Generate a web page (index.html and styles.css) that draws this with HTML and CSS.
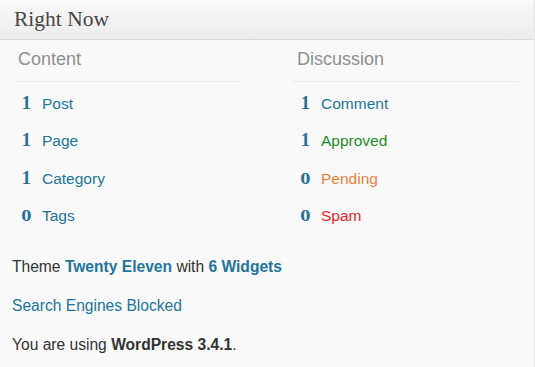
FILE: index.html
```html
<!DOCTYPE html>
<html>
<head>
<meta charset="utf-8">
<link rel="stylesheet" href="styles.css">
</head>
<body>
<div class="widget">
  <div class="widget-head">Right Now</div>
  <div class="widget-body">
    <div class="columns">
      <div class="col">
        <div class="col-title">Content</div>
        <div class="row"><span class="count">1</span><a class="label">Post</a></div>
        <div class="row"><span class="count">1</span><a class="label">Page</a></div>
        <div class="row"><span class="count">1</span><a class="label">Category</a></div>
        <div class="row"><span class="count"><span class="zero">0</span></span><a class="label">Tags</a></div>
      </div>
      <div class="col">
        <div class="col-title">Discussion</div>
        <div class="row"><span class="count">1</span><a class="label">Comment</a></div>
        <div class="row"><span class="count">1</span><a class="label approved">Approved</a></div>
        <div class="row"><span class="count"><span class="zero">0</span></span><a class="label pending">Pending</a></div>
        <div class="row"><span class="count"><span class="zero">0</span></span><a class="label spam">Spam</a></div>
      </div>
    </div>
    <div class="info">
      <p class="line">Theme <a class="strong-link">Twenty Eleven</a> with <a class="strong-link">6 Widgets</a></p>
      <p class="line"><a class="link">Search Engines Blocked</a></p>
      <p class="line">You are using <b class="strong">WordPress 3.4.1</b>.</p>
    </div>
  </div>
</div>
</body>
</html>
```
FILE: styles.css
```css
html, body {
  margin: 0;
  padding: 0;
  background: #f9f9f9;
}
body {
  font-family: "Liberation Sans", Arial, sans-serif;
  color: #333;
}
.widget {
  width: 534px;
  height: 367px;
  border-right: 1px solid #e2e2e2;
  background: #f9f9f9;
}
.widget-head {
  height: 39px;
  line-height: 39px;
  padding-left: 14px;
  border-bottom: 1px solid #dcdcdc;
  background: linear-gradient(to bottom, #f9f9f9, #ececec);
  font-family: "Liberation Serif", Georgia, serif;
  font-size: 21.5px;
  color: #464646;
}
.widget-body {
  padding: 0 15px 0 14px;
}
.columns {
  display: grid;
  grid-template-columns: 228px 226px;
  column-gap: 51px;
  padding-top: 8px;
}
.col-title {
  font-size: 18px;
  line-height: 22px;
  color: #8f8f8f;
  padding: 0 0 11px 4px;
  border-bottom: 1px solid #ececec;
  margin-bottom: 3px;
}
.row {
  display: flex;
  align-items: baseline;
  gap: 11px;
  height: 37.3px;
  line-height: 37.3px;
}
.count {
  width: 17px;
  text-align: right;
  font-family: "Liberation Serif", Georgia, serif;
  font-weight: bold;
  font-size: 18.5px;
  color: #2a6f96;
}
.zero {
  display: inline-block;
  font-size: 17px;
  transform: scaleX(1.2);
  transform-origin: right center;
}
.label {
  font-size: 15.5px;
  color: #21759b;
}
.approved { color: #1f8a28; }
.pending { color: #e8823a; }
.spam { color: #ee1c2c; }
.info {
  padding: 13px 0 0 0;
  margin-left: -2px;
}
.line {
  margin: 0;
  font-size: 15.6px;
  line-height: 39px;
  color: #333;
}
.strong-link {
  font-weight: bold;
  color: #21759b;
}
.link {
  color: #21759b;
}
.strong {
  font-weight: bold;
  color: #333;
}
```
